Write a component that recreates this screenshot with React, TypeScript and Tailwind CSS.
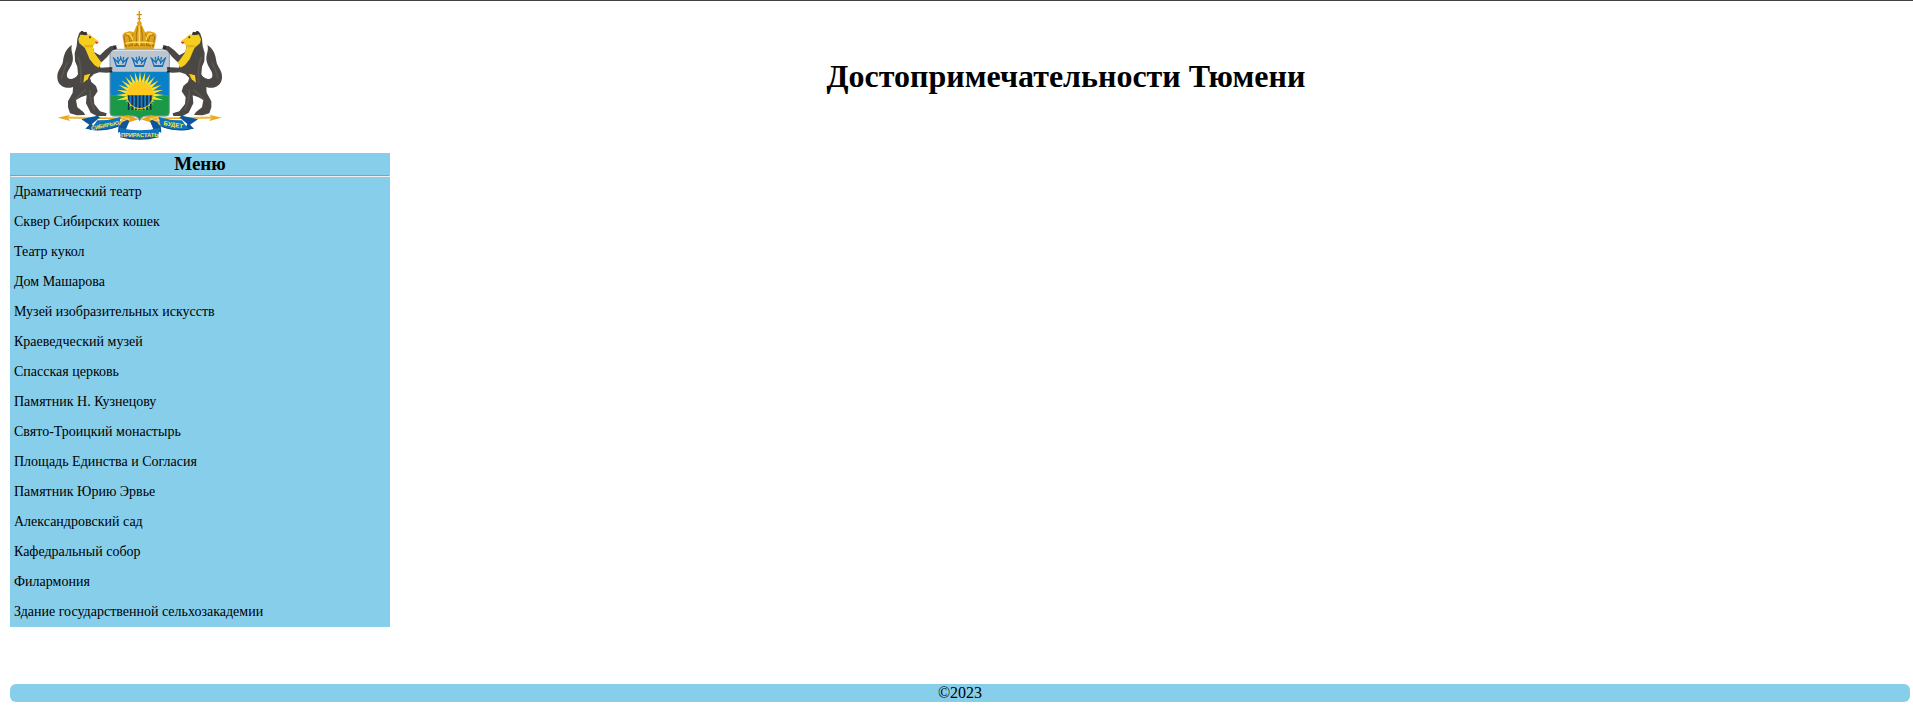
import React from "react";

const places: string[] = [
  "Драматический театр",
  "Сквер Сибирских кошек",
  "Театр кукол",
  "Дом Машарова",
  "Музей изобразительных искусств",
  "Краеведческий музей",
  "Спасская церковь",
  "Памятник Н. Кузнецову",
  "Свято-Троицкий монастырь",
  "Площадь Единства и Согласия",
  "Памятник Юрию Эрвье",
  "Александровский сад",
  "Кафедральный собор",
  "Филармония",
  "Здание государственной сельхозакадемии",
];

function Sable() {
  return (
    <g>
      {/* tail */}
      <path
        d="M78 258C54 270 24 262 22 234C20 212 36 202 39 184C41 166 47 146 66 135C60 152 72 164 68 184C64 204 48 214 51 229C54 242 72 238 84 226Z"
        fill="#4a4744"
      />
      {/* body with both hind legs */}
      <path
        d="M88 98L98 93L107 103L125 124L132 156L150 166L166 150L182 138L198 140L200 147L186 152L172 170L158 184L146 192L152 203L176 202L187 207L185 217L170 218L148 217L132 222L120 234L124 246L138 258L143 274L131 292L133 312L150 334L170 340L168 348L140 348L122 338L108 310L110 286L94 291L78 300L82 322L100 336L106 345L80 346L60 340L54 322L54 304L68 278L70 250L84 222L82 200L75 184L74 160L80 138L82 116Z"
        fill="#4a4744"
      />
      <path
        d="M84 170Q96 200 92 250M76 300Q92 280 108 268M120 270Q118 300 134 330M34 236Q40 210 52 186"
        fill="none"
        stroke="#66625d"
        strokeWidth="5"
        opacity=".6"
      />
      {/* muzzle, throat and belly */}
      <path
        d="M92 103L106 106L119 103L132 114L144 122L145 128L134 132L128 140L133 158L146 176L155 188L146 203L133 195L119 178L110 156L104 143L88 130L85 118Z"
        fill="#f5cd1c"
      />
      <path d="M90 103L93 93L99 94L104 104ZM101 97L109 95L113 104L104 105Z" fill="#35322f" />
      <path d="M104 135Q118 136 129 134L127 140Q114 144 104 140Z" fill="#d89b16" opacity=".6" />
      <circle cx="120" cy="112" r="3" fill="#35322f" />
      <path d="M134 125L146 126L140 132Z" fill="#dd2f20" />
      <path d="M103 226L121 221L113 238L100 248Z" fill="#f5cd1c" />
      <path
        d="M188 139L199 138M190 144L200 144M178 204L187 204M178 213L187 216"
        stroke="#282523"
        strokeWidth="4"
      />
    </g>
  );
}

function Crown() {
  return (
    <g>
      <path
        d="M224 146L218 112Q215 98 231 96Q239 91 251 97L260 76Q268 67 276 76L285 97Q297 91 306 96Q322 98 319 112L312 146Q268 153 224 146Z"
        fill="#e0a51c"
      />
      <path
        d="M228 140L222 112Q224 102 235 106Q242 116 240 138M247 138Q239 108 251 102M308 140L314 112Q312 102 301 106Q294 116 296 138M289 138Q297 108 285 102M260 138Q256 105 263 80M276 138Q280 105 273 80"
        fill="none"
        stroke="#a87118"
        strokeWidth="3"
      />
      <path
        d="M230 102Q244 98 247 120M306 102Q292 98 289 120M268 76V136M226 130Q268 122 311 130"
        fill="none"
        stroke="#ffdc55"
        strokeWidth="4"
      />
      <path d="M226 139Q268 132 311 139" fill="none" stroke="#a66c12" strokeWidth="4" strokeDasharray="5 4" />
      <circle cx="268" cy="70" r="7" fill="#e0a51c" />
      <path d="M268 33V64M260 44H276M263 56H273" stroke="#cf9315" strokeWidth="4" />
    </g>
  );
}

function SmallCrown({ x }: { x: number }) {
  return (
    <g transform={`translate(${x} 184)`} fill="none" stroke="#1671b8">
      <path d="M-20 -8L-13 13H13L20 -8L8 3L0 -8L-8 3Z" strokeWidth="4" />
      <path d="M-14 14H14" strokeWidth="6" />
      <path d="M-9 -11L-6 8M9 -11L6 8" strokeWidth="3" />
      <path d="M0 -15V-6M-23 -10L-17 -7M23 -10L17 -7M-10 -13L-7 -8M10 -13L7 -8" strokeWidth="4" />
    </g>
  );
}

function Arrow() {
  return (
    <g>
      <path d="M54 353L252 356" stroke="#e6a31a" strokeWidth="5" />
      <path d="M54 351L250 354" stroke="#ffdb54" strokeWidth="2" />
      <path d="M23 353L60 344L53 353L61 363Z" fill="#efaa1b" />
      <path d="M208 350L236 346L266 358L228 370L207 366L220 357Z" fill="#e8a51c" />
      <path d="M214 352L238 356M214 363L238 358" stroke="#fff0a0" strokeWidth="2" />
    </g>
  );
}

const upperRays = Array.from({ length: 17 }, (_, i) => 12 - i * 12.75);
const lowerRays = Array.from({ length: 13 }, (_, i) => 24 + i * 11);

function Shield() {
  return (
    <g>
      <defs>
        <clipPath id="shield-shape">
          <path d="M179 147H359V338Q359 349 347 349H286Q274 350 269 363Q264 350 252 349H191Q179 349 179 338Z" />
        </clipPath>
        <clipPath id="sun-bottom">
          <path d="M220 286H320V335H220Z" />
        </clipPath>
      </defs>
      <g clipPath="url(#shield-shape)">
        <path d="M179 147H359V216H179Z" fill="#bcc6d1" />
        <path d="M179 215H359V287H179Z" fill="#0a80c6" />
        <path d="M179 286H359V365H179Z" fill="#1a9a48" />
      </g>
      {upperRays.map((angle) => (
        <path
          key={angle}
          d="M308 281L342 286L308 291Z"
          fill="#ffe02e"
          transform={`rotate(${angle} 270 286)`}
        />
      ))}
      {lowerRays.map((angle) => (
        <path
          key={angle}
          d="M308 283L318 286L308 289Z"
          fill="#ffe02e"
          transform={`rotate(${angle} 270 286)`}
        />
      ))}
      <circle cx="270" cy="287" r="40" fill="#ffc81c" />
      <g clipPath="url(#sun-bottom)">
        <circle cx="270" cy="287" r="39" fill="#1a7cc2" />
        <path
          d="M236 286V330M247 286V330M258 286V330M269 286V330M280 286V330M291 286V330M302 286V330"
          stroke="#14304a"
          strokeWidth="5"
        />
        <circle cx="270" cy="287" r="39" fill="none" stroke="#f2c725" strokeWidth="3" />
      </g>
      <path
        d="M180 148H358V338Q358 348 347 348H286Q274 349 269 362Q264 349 252 348H191Q180 348 180 338Z"
        fill="none"
        stroke="#8298a8"
        strokeWidth="3"
      />
      <path d="M182 151H356" stroke="#dce2e8" strokeWidth="4" />
      <SmallCrown x={212} />
      <SmallCrown x={268} />
      <SmallCrown x={325} />
    </g>
  );
}

function RibbonSide() {
  return (
    <g>
      <path d="M94 358L142 347L150 352L126 372L134 390L106 386L118 374Z" fill="#0a559c" />
      <path d="M206 372L232 359L238 364L228 388L204 398Z" fill="#0a559c" />
      <path d="M188 372L212 362L214 372L206 378Z" fill="#e4b833" />
      <path d="M142 361Q176 362 212 351L206 379Q166 396 118 389Q134 376 142 361Z" fill="#0f74bb" />
      <path d="M122 388Q164 394 204 379" fill="none" stroke="#154f82" strokeWidth="3" />
    </g>
  );
}

function Ribbon() {
  return (
    <g>
      <RibbonSide />
      <g transform="translate(538 0) scale(-1 1)">
        <RibbonSide />
      </g>
      <path d="M208 383Q270 398 330 383L324 409Q269 425 212 409Z" fill="#0f74bb" />
      <path d="M211 410Q269 425 325 410" fill="none" stroke="#154f82" strokeWidth="4" />
      <g
        fill="#ffe834"
        fontFamily="'Liberation Sans', Arial, sans-serif"
        fontWeight="700"
        textAnchor="middle"
      >
        <text x="165" y="382" fontSize="16" transform="rotate(-12 165 376)">
          СИБИРЬЮ
        </text>
        <text x="269" y="410" fontSize="17">
          ПРИРАСТАТЬ
        </text>
        <text x="370" y="380" fontSize="18" transform="rotate(10 370 374)">
          БУДЕТ
        </text>
      </g>
    </g>
  );
}

function CoatOfArms() {
  return (
    <svg
      className="block h-[136px] w-[180px] shrink-0"
      viewBox="0 24 540 408"
      role="img"
      aria-label="Герб"
    >
      <Crown />
      <Shield />
      <Sable />
      <g transform="translate(538 0) scale(-1 1)">
        <Sable />
      </g>
      <Arrow />
      <g transform="translate(538 0) scale(-1 1)">
        <Arrow />
      </g>
      <Ribbon />
    </svg>
  );
}

export default function App() {
  return (
    <div className="border-t border-[#414042] bg-white pr-[3px] pb-1.5 pl-2.5 font-['Liberation_Serif','Times_New_Roman',serif] text-black">
      <header className="flex items-center pt-[7px] pb-[9px] pl-10">
        <CoatOfArms />
        <h1 className="flex-1 pr-2 text-center text-[32px] leading-9 font-bold">
          Достопримечательности Тюмени
        </h1>
      </header>
      <nav className="w-1/5 bg-[#87ceeb]" aria-labelledby="menu-title">
        <h2
          id="menu-title"
          className="h-[22px] text-center text-[19px] leading-[22px] font-bold"
        >
          Меню
        </h2>
        <hr className="h-0.5 border border-t-[#9a9a9a] border-r-[#eeeeee] border-b-[#eeeeee] border-l-[#9a9a9a]" />
        <ul>
          {places.map((place) => (
            <li key={place} className="flex h-[30px] items-center px-1 text-[14px] leading-4">
              <a href="#">{place}</a>
            </li>
          ))}
        </ul>
      </nav>
      <footer className="mt-[57px] rounded-md bg-[#87ceeb] text-center text-base leading-[18px]">
        ©2023
      </footer>
    </div>
  );
}
